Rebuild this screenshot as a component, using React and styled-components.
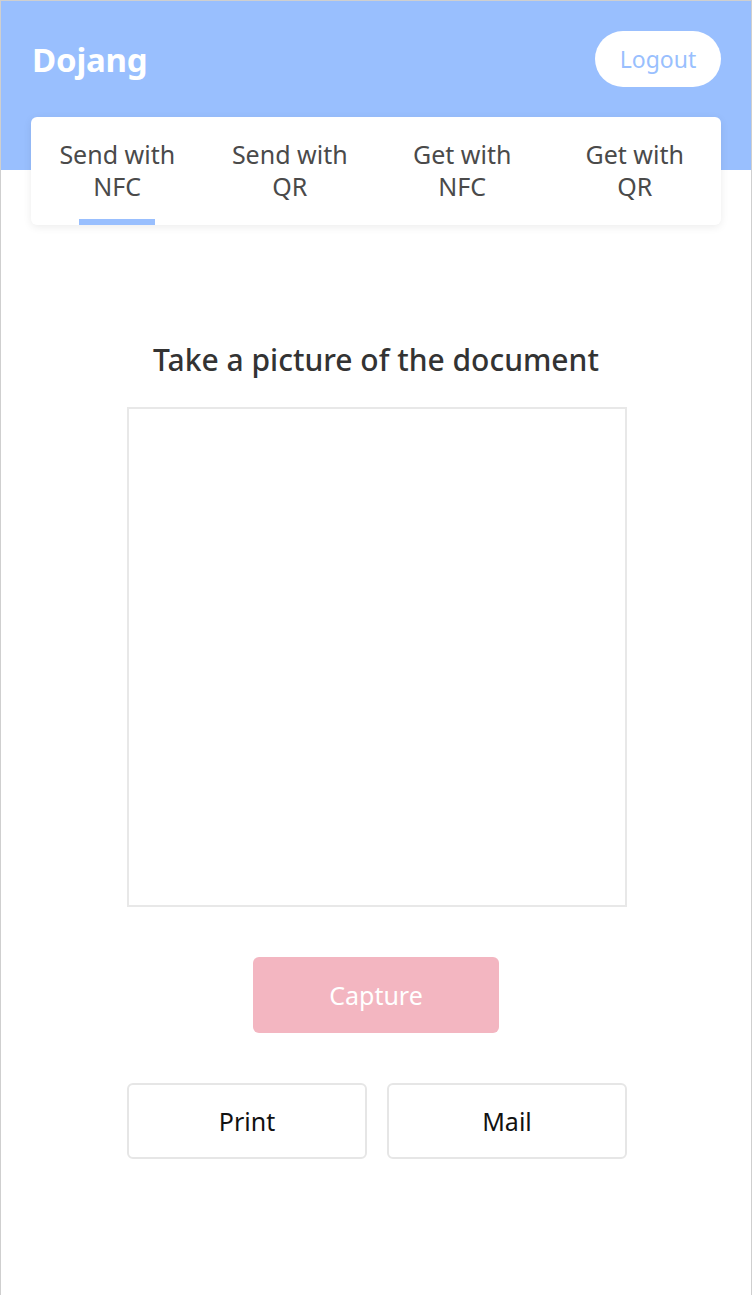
import React, { useState } from 'react';
import styled, { createGlobalStyle } from 'styled-components';

const GlobalStyle = createGlobalStyle`
    html, body {
        margin: 0;
        padding: 0;
        background: white;
    }
    body {
        font-family: "Noto Sans", "Open Sans", sans-serif;
    }
    * {
        box-sizing: border-box;
    }
`

const tabs = [
    { id: 'send-nfc', label: ['Send with', 'NFC'] },
    { id: 'send-qr', label: ['Send with', 'QR'] },
    { id: 'get-nfc', label: ['Get with', 'NFC'] },
    { id: 'get-qr', label: ['Get with', 'QR'] },
];

const App = () => {
    const [active, setActive] = useState('send-nfc');

    return (<Page>
        <GlobalStyle />
        <Top>
            <HeaderRow>
                <Title>Dojang</Title>
                <LogoutButton>Logout</LogoutButton>
            </HeaderRow>
            <TabCard>
                {
                    tabs.map(tab => {
                        return <Tab key={tab.id} active={active === tab.id} onClick={() => setActive(tab.id)}>
                            {tab.label[0]}<br />{tab.label[1]}
                        </Tab>
                    })
                }
            </TabCard>
        </Top>
        <Content>
            <Heading>Take a picture of the document</Heading>
            <PreviewBox />
            <CaptureButton>Capture</CaptureButton>
            <ActionRow>
                <OutlineButton>Print</OutlineButton>
                <OutlineButton>Mail</OutlineButton>
            </ActionRow>
        </Content>
    </Page>);
}

export default App;

const Page = styled.div`
    min-height: 1295px;
    border: 1px solid #cfcfcf;
    border-bottom: none;
    background: white;
`

const Top = styled.div`
    background: linear-gradient(to bottom, #99bffe 169px, white 169px);
    padding: 30px 30px 0;
`

const HeaderRow = styled.div`
    display: flex;
    justify-content: space-between;
    align-items: center;
    height: 56px;
`

const Title = styled.h1`
    margin: 0 0 0 1px;
    font-size: 33px;
    font-weight: 700;
    color: white;
    letter-spacing: -0.2px;
`

const LogoutButton = styled.button`
    width: 126px;
    height: 56px;
    border: none;
    border-radius: 28px;
    background: white;
    color: #99bffe;
    font-family: inherit;
    font-size: 23px;
    padding: 0;
    cursor: pointer;
`

const TabCard = styled.div`
    margin-top: 30px;
    height: 108px;
    display: grid;
    grid-template-columns: repeat(4, 1fr);
    background: white;
    border-radius: 6px;
    box-shadow: 0 2px 8px rgba(0, 0, 0, 0.08);
`

const Tab = styled.div`
    position: relative;
    padding-top: 21px;
    text-align: center;
    font-size: 25px;
    line-height: 32px;
    color: #4a4a4a;
    cursor: pointer;

    &::after {
        content: '';
        display: ${props => props.active ? 'block' : 'none'};
        position: absolute;
        left: 50%;
        bottom: 0;
        width: 76px;
        height: 6px;
        transform: translateX(-50%);
        background: #99bffe;
    }
`

const Content = styled.div`
    display: flex;
    flex-direction: column;
    align-items: center;
    padding-top: 115px;
    padding-left: 2px;
`

const Heading = styled.h2`
    margin: 0 2px 0 0;
    font-size: 30px;
    font-weight: 500;
    line-height: 40px;
    color: #333;
`

const PreviewBox = styled.div`
    margin-top: 27px;
    width: 500px;
    height: 500px;
    border: 2px solid #e8e8e8;
`

const CaptureButton = styled.button`
    margin: 50px 2px 0 0;
    width: 246px;
    height: 76px;
    border: none;
    border-radius: 6px;
    background: #f3b6c1;
    color: white;
    font-family: inherit;
    font-size: 25px;
    cursor: pointer;
`

const ActionRow = styled.div`
    margin-top: 50px;
    width: 500px;
    display: grid;
    grid-template-columns: 1fr 1fr;
    gap: 20px;
`

const OutlineButton = styled.button`
    height: 76px;
    border: 2px solid #e6e6e6;
    border-radius: 6px;
    background: white;
    color: #111;
    font-family: inherit;
    font-size: 25px;
    cursor: pointer;
`
